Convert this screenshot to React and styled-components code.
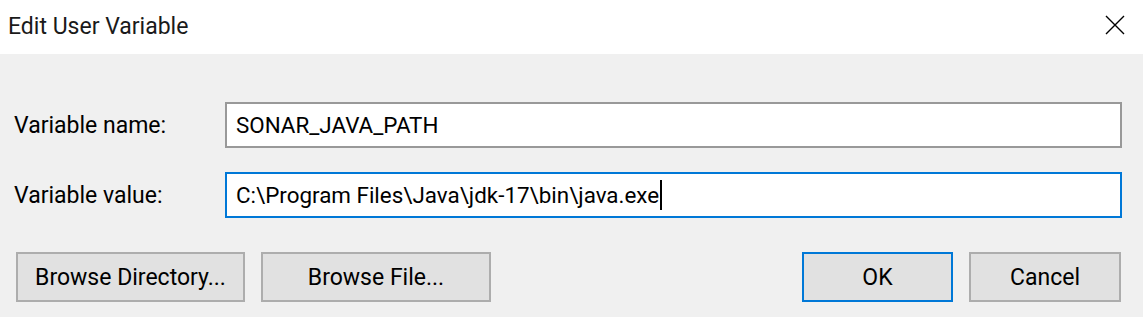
import React from 'react';
import styled, { createGlobalStyle } from 'styled-components';

const Global = createGlobalStyle`
  html, body {
    margin: 0;
    padding: 0;
    background: #f0f0f0;
  }
  body {
    font-family: Roboto, 'Open Sans', sans-serif;
    color: #000;
  }
`;

const Dialog = styled.div`
  width: 1143px;
  height: 317px;
  display: flex;
  flex-direction: column;
  background: #f0f0f0;
  overflow: hidden;
`;

const TitleBar = styled.div`
  height: 54px;
  flex: none;
  background: #fff;
  display: flex;
  align-items: center;
  justify-content: space-between;
  padding: 0 18px 0 8px;
`;

const Title = styled.span`
  font-size: 23px;
  color: #1a1a1a;
  margin-top: -2px;
`;

const CloseButton = styled.button`
  width: 20px;
  height: 20px;
  padding: 0;
  border: none;
  background: none;
  display: flex;
  margin-top: -4px;
`;

const Body = styled.div`
  flex: 1;
  display: flex;
  flex-direction: column;
  padding: 48px 21px 0 14px;
`;

const Fields = styled.div`
  display: grid;
  grid-template-columns: 211px 1fr;
  row-gap: 24px;
  align-items: center;
`;

const Label = styled.label`
  font-size: 23px;
`;

const Field = styled.div`
  height: 46px;
  box-sizing: border-box;
  background: #fff;
  border: 2px solid ${p => (p.$focused ? '#0078d7' : '#999')};
  display: flex;
  align-items: center;
  padding: 0 9px;
  font-size: 22.4px;
  white-space: nowrap;
`;

const Caret = styled.span`
  display: inline-block;
  width: 2px;
  height: 30px;
  background: #000;
  margin-left: 1px;
`;

const ButtonRow = styled.div`
  display: flex;
  justify-content: space-between;
  margin-top: 34px;
  padding: 0 1px 0 2px;
`;

const Group = styled.div`
  display: flex;
  gap: 16px;
`;

const Button = styled.button`
  width: ${p => p.$width}px;
  height: 50px;
  box-sizing: border-box;
  background: #e1e1e1;
  border: 2px solid ${p => (p.$primary ? '#0078d7' : '#adadad')};
  font-family: inherit;
  font-size: 23px;
  color: #000;
  padding: 0;
`;

export default function App() {
  return (
    <>
      <Global />
      <Dialog>
        <TitleBar>
          <Title>Edit User Variable</Title>
          <CloseButton aria-label="Close">
            <svg width="20" height="20" viewBox="0 0 20 20">
              <path d="M1 1 L19 19 M19 1 L1 19" stroke="#000" strokeWidth="1.4" fill="none" />
            </svg>
          </CloseButton>
        </TitleBar>
        <Body>
          <Fields>
            <Label>Variable name:</Label>
            <Field>SONAR_JAVA_PATH</Field>
            <Label>Variable value:</Label>
            <Field $focused>
              C:\Program Files\Java\jdk-17\bin\java.exe
              <Caret />
            </Field>
          </Fields>
          <ButtonRow>
            <Group>
              <Button $width={229}>Browse Directory...</Button>
              <Button $width={230}>Browse File...</Button>
            </Group>
            <Group>
              <Button $width={151} $primary>OK</Button>
              <Button $width={152}>Cancel</Button>
            </Group>
          </ButtonRow>
        </Body>
      </Dialog>
    </>
  );
}
